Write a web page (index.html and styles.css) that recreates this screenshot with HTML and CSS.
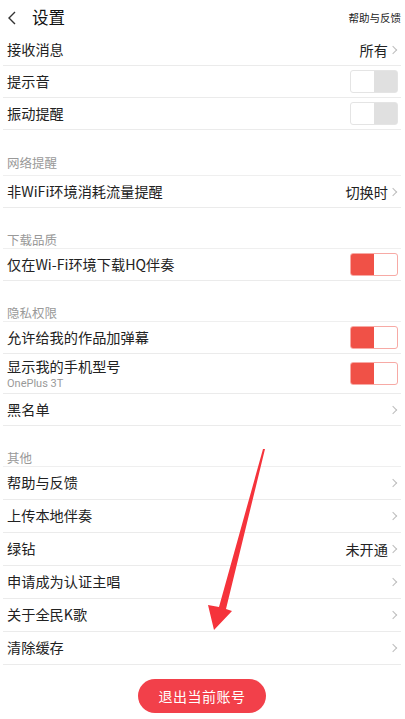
FILE: index.html
```html
<!DOCTYPE html>
<html lang="zh-CN">

<head>
  <meta charset="UTF-8" />
  <title>设置</title>
  <meta name="viewport" content="width=device-width, initial-scale=1.0" />
  <link rel="stylesheet" href="styles.css">
</head>

<body>
  <div class="settings">
    <div class="top-bar">
      <div class="top-bar-left">
        <svg class="back-icon" width="10" height="14" viewBox="0 0 10 14">
          <path d="M8 1 L2 7 L8 13" fill="none" stroke="#333" stroke-width="1.4" />
        </svg>
        <span class="top-title">设置</span>
      </div>
      <span class="top-link">帮助与反馈</span>
    </div>

    <div class="row">
      <span class="row-label">接收消息</span>
      <span class="row-value">所有<i class="chevron"></i></span>
    </div>
    <div class="row">
      <span class="row-label">提示音</span>
      <span class="switch"></span>
    </div>
    <div class="row">
      <span class="row-label">振动提醒</span>
      <span class="switch"></span>
    </div>

    <div class="section-title section-title--first">网络提醒</div>
    <div class="row">
      <span class="row-label">非WiFi环境消耗流量提醒</span>
      <span class="row-value">切换时<i class="chevron"></i></span>
    </div>

    <div class="section-title">下载品质</div>
    <div class="row">
      <span class="row-label">仅在Wi-Fi环境下载HQ伴奏</span>
      <span class="switch switch--on"></span>
    </div>

    <div class="section-title">隐私权限</div>
    <div class="row">
      <span class="row-label">允许给我的作品加弹幕</span>
      <span class="switch switch--on"></span>
    </div>
    <div class="row row--tall">
      <div class="row-text">
        <span class="row-label">显示我的手机型号</span>
        <span class="row-sub">OnePlus 3T</span>
      </div>
      <span class="switch switch--on"></span>
    </div>
    <div class="row">
      <span class="row-label">黑名单</span>
      <i class="chevron"></i>
    </div>

    <div class="section-title">其他</div>
    <div class="group-other">
      <div class="row">
        <span class="row-label">帮助与反馈</span>
        <i class="chevron"></i>
      </div>
      <div class="row">
        <span class="row-label">上传本地伴奏</span>
        <i class="chevron"></i>
      </div>
      <div class="row">
        <span class="row-label">绿钻</span>
        <span class="row-value">未开通<i class="chevron"></i></span>
      </div>
      <div class="row">
        <span class="row-label">申请成为认证主唱</span>
        <i class="chevron"></i>
      </div>
      <div class="row">
        <span class="row-label">关于全民K歌</span>
        <i class="chevron"></i>
      </div>
      <div class="row">
        <span class="row-label">清除缓存</span>
        <i class="chevron"></i>
      </div>
    </div>

    <div class="logout-wrap">
      <button class="logout-btn" type="button">退出当前账号</button>
    </div>

    <!-- annotation arrow drawn over the list -->
    <svg class="annotation" width="405" height="719" viewBox="0 0 405 719">
      <polygon points="263,449 265,449 226,609 232,611 214,630 208,605 219,607" fill="#f5333b" />
    </svg>
  </div>
</body>

</html>
```

FILE: styles.css
```css
* {
  box-sizing: border-box;
}

html,
body {
  margin: 0;
  padding: 0;
  background: #fff;
  font-family: "Noto Sans CJK SC", "Noto Sans", sans-serif;
  color: #222;
}

.settings {
  position: relative;
  width: 405px;
  min-height: 719px;
  padding: 0 4px 0 3px;
}

.top-bar {
  display: flex;
  align-items: center;
  justify-content: space-between;
  height: 34px;
  padding: 0 0 0 4px;
}

.top-bar-left {
  display: flex;
  align-items: center;
  gap: 15px;
}

.back-icon {
  display: block;
  margin-top: 1px;
}

.top-title {
  font-size: 16.5px;
  color: #111;
}

.top-link {
  font-size: 10.5px;
  color: #222;
}

.row {
  display: flex;
  align-items: center;
  justify-content: space-between;
  height: 32px;
  padding: 0 2px 0 4px;
  border-bottom: 1px solid #ebebeb;
}

.row--tall {
  height: 40px;
}

.group-other .row {
  height: 33px;
}

.row-label {
  font-size: 14.2px;
  line-height: 1.2;
}

.row-text {
  display: flex;
  flex-direction: column;
  gap: 2px;
  padding-top: 2px;
}

.row-sub {
  font-size: 11px;
  color: #999;
  font-family: "Roboto", "Noto Sans", sans-serif;
  line-height: 1.2;
}

.row-value {
  display: flex;
  align-items: center;
  font-size: 14.2px;
}

.chevron {
  display: inline-block;
  width: 6px;
  height: 6px;
  margin: 0 3px 0 2px;
  border-top: 1.2px solid #bdbdbd;
  border-right: 1.2px solid #bdbdbd;
  transform: rotate(45deg);
}

.switch {
  display: flex;
  width: 48px;
  height: 23px;
  margin-right: 1px;
  border: 1px solid #e4e4e4;
  border-radius: 3px;
  background: linear-gradient(to right, #fff 50%, #e0e0e0 50%);
}

.switch--on {
  border-color: #f7aaa5;
  background: linear-gradient(to right, #f05147 50%, #fff 50%);
}

.section-title {
  display: flex;
  align-items: flex-end;
  height: 41px;
  padding: 0 0 2px 4px;
  font-size: 12.5px;
  line-height: 1;
  color: #999;
  border-bottom: 1px solid #efefef;
}

.section-title--first {
  height: 46px;
  padding-bottom: 6px;
}

.logout-wrap {
  display: flex;
  justify-content: center;
  padding-top: 14px;
}

.logout-btn {
  width: 128px;
  height: 34px;
  border: none;
  border-radius: 17px;
  background: #f2404a;
  color: #fff;
  font-family: inherit;
  font-size: 14px;
  letter-spacing: 0.5px;
}

.annotation {
  position: absolute;
  top: 0;
  left: 0;
  pointer-events: none;
}
```
